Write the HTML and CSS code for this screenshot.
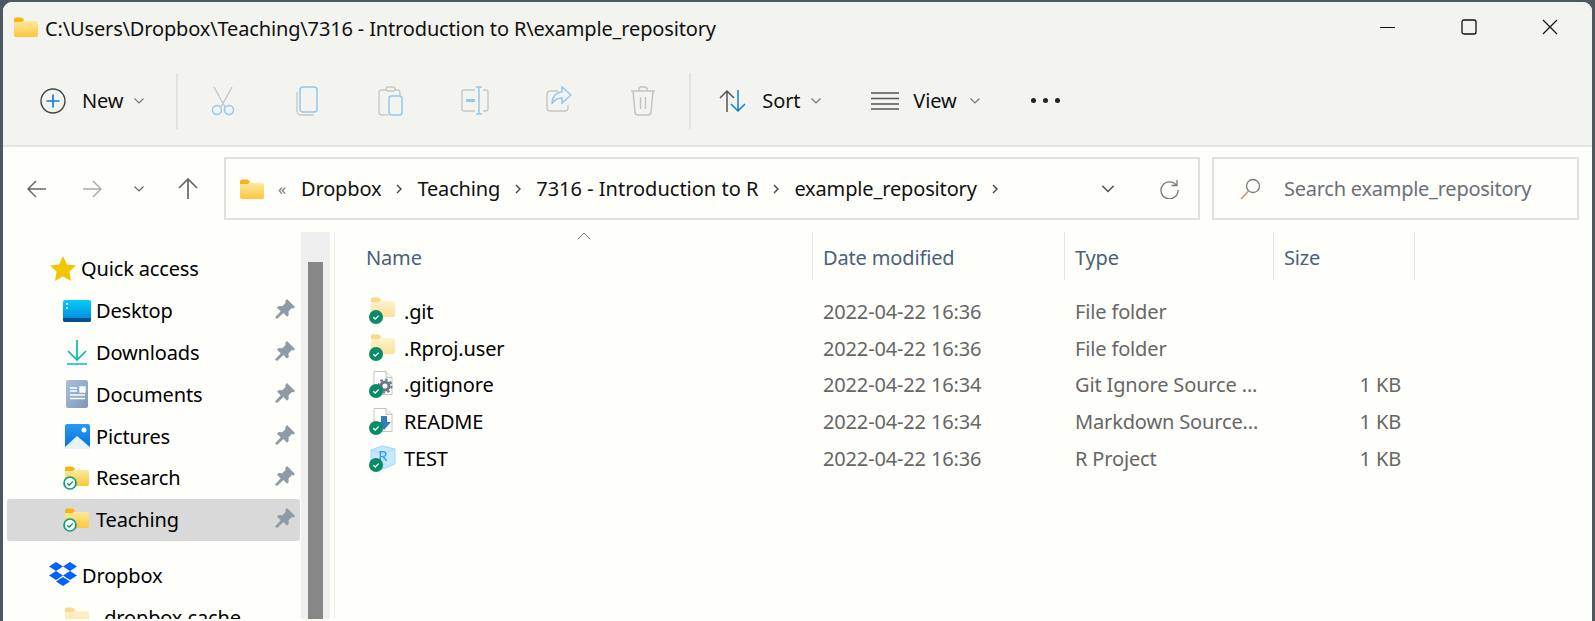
FILE: index.html
```html
<!DOCTYPE html>
<html>
<head>
  <title>example_repository</title>
  <link rel="stylesheet" href="styles.css">
</head>
<body>
  <svg class="defs" width="0" height="0">
    <defs>
      <linearGradient id="folderFill" x1="0" y1="0" x2="0" y2="1">
        <stop offset="0" stop-color="#fee9a0"/>
        <stop offset="1" stop-color="#fbc63a"/>
      </linearGradient>
      <linearGradient id="desktopFill" x1="0" y1="0" x2="0" y2="1">
        <stop offset="0" stop-color="#06cdf9"/>
        <stop offset="1" stop-color="#0382d8"/>
      </linearGradient>
      <linearGradient id="docFill" x1="0" y1="0" x2="1" y2="1">
        <stop offset="0" stop-color="#a9bfd8"/>
        <stop offset="1" stop-color="#7c9abb"/>
      </linearGradient>
      <linearGradient id="picFill" x1="0" y1="0" x2="0" y2="1">
        <stop offset="0" stop-color="#2b9cf2"/>
        <stop offset="1" stop-color="#0070d6"/>
      </linearGradient>
      <symbol id="folder" viewBox="0 0 24 20">
        <path d="M0 4h22a2 2 0 0 1 2 2v12a2 2 0 0 1-2 2H2a2 2 0 0 1-2-2z" fill="url(#folderFill)"/>
        <path d="M0 2.500a2 2 0 0 1 2-2h5.500l3 2.500-3 2H0z" fill="#f6b418"/>
      </symbol>
      <symbol id="pin" viewBox="0 0 20 20">
        <path d="M12 0l8 8-1.500 1.500-1.700-.4-3.300 3.300.2 3.600-1.700 1.700-3.500-3.700L2 20l-2-1.500 5.700-6.300-3.700-3.500L3.700 7l3.600.2 3.300-3.300-.4-1.700z" fill="#8f9ba4"/>
      </symbol>
      <symbol id="chev" viewBox="0 0 12 8">
        <path d="M1.500 1.500L6 6l4.500-4.500" fill="none" stroke="currentColor" stroke-width="1.200"/>
      </symbol>
      <symbol id="crumb" viewBox="0 0 8 12">
        <path d="M2 2l4 4-4 4" fill="none" stroke="#444" stroke-width="1.400"/>
      </symbol>
      <symbol id="syncSolid" viewBox="0 0 14 14">
        <circle cx="7" cy="7" r="7" fill="#0a8a66"/>
        <path d="M4.300 7.200l1.900 1.800 3.500-3.400" fill="none" stroke="#fff" stroke-width="1.300"/>
      </symbol>
      <symbol id="syncRing" viewBox="0 0 14 14">
        <circle cx="7" cy="7" r="6" fill="#fff" stroke="#0aa07a" stroke-width="1.700"/>
        <path d="M4.200 7.200l2 1.900 3.600-3.600" fill="none" stroke="#0a8a66" stroke-width="1.300"/>
      </symbol>
      <symbol id="page" viewBox="0 0 20 24">
        <path d="M1 .5h12l6 6v17H1z" fill="#fff" stroke="#c4c4c4"/>
        <path d="M13 .5v6h6" fill="#eee" stroke="#c4c4c4"/>
      </symbol>
    </defs>
  </svg>

  <div class="window">
    <div class="titlebar">
      <svg class="title-folder" width="24" height="20"><use href="#folder"/></svg>
      <span class="title-text">C:\Users\Dropbox\Teaching\7316 - Introduction to R\example_repository</span>
      <div class="win-buttons">
        <svg class="win-btn" width="16" height="16" viewBox="0 0 16 16"><path d="M0 8.500h15" stroke="#111" stroke-width="1.200"/></svg>
        <svg class="win-btn" width="16" height="16" viewBox="0 0 16 16"><rect x="1" y="1" width="14" height="14" rx="2" fill="none" stroke="#111" stroke-width="1.300"/></svg>
        <svg class="win-btn" width="16" height="16" viewBox="0 0 16 16"><path d="M1 1l14 14M15 1L1 15" stroke="#111" stroke-width="1.200"/></svg>
      </div>
    </div>

    <div class="toolbar">
      <div class="tool tool-new">
        <svg width="26" height="26" viewBox="0 0 26 26"><circle cx="13" cy="13" r="12" fill="none" stroke="#444" stroke-width="1.400"/><path d="M13 6.500v13M6.500 13h13" stroke="#0a7fe0" stroke-width="1.700"/></svg>
        <span>New</span>
        <svg class="tool-chev" width="12" height="8"><use href="#chev"/></svg>
      </div>
      <div class="tool-sep sep-first"></div>
      <div class="tool-icons">
        <div class="tool-icon">
          <svg width="26" height="30" viewBox="0 0 26 30"><path d="M4 1l11 20M22 1L11 21" fill="none" stroke="#c4c4c4" stroke-width="1.300"/><circle cx="7" cy="24" r="4.500" fill="none" stroke="#93c8f0" stroke-width="1.500"/><circle cx="19" cy="24" r="4.500" fill="none" stroke="#93c8f0" stroke-width="1.500"/></svg>
        </div>
        <div class="tool-icon">
          <svg width="24" height="30" viewBox="0 0 24 30"><path d="M2 6v19a4 4 0 0 0 4 4h13" fill="none" stroke="#c8c8c8" stroke-width="1.400"/><rect x="5" y="1" width="17" height="25" rx="3" fill="none" stroke="#93c8f0" stroke-width="1.500"/></svg>
        </div>
        <div class="tool-icon">
          <svg width="26" height="30" viewBox="0 0 26 30"><path d="M9 4H3.500A2.500 2.500 0 0 0 1 6.500v20A2.500 2.500 0 0 0 3.500 29H10M17 4h2.500A2.500 2.500 0 0 1 22 6.500V9" fill="none" stroke="#c8c8c8" stroke-width="1.400"/><rect x="8" y="1" width="9" height="4" rx="1.500" fill="none" stroke="#c8c8c8" stroke-width="1.400"/><rect x="11" y="10" width="13" height="19" rx="2.500" fill="none" stroke="#93c8f0" stroke-width="1.500"/></svg>
        </div>
        <div class="tool-icon">
          <svg width="28" height="30" viewBox="0 0 28 30"><path d="M14 4H3a2 2 0 0 0-2 2v17a2 2 0 0 0 2 2h11M22 4h3a2 2 0 0 1 2 2v17a2 2 0 0 1-2 2h-3" fill="none" stroke="#c8c8c8" stroke-width="1.400"/><path d="M15 1h6M18 1v27M15 28h6" fill="none" stroke="#93c8f0" stroke-width="1.500"/><path d="M5 14.500h9" stroke="#93c8f0" stroke-width="3"/></svg>
        </div>
        <div class="tool-icon">
          <svg width="26" height="26" viewBox="0 0 26 26"><path d="M12 5H4a3 3 0 0 0-3 3v14a3 3 0 0 0 3 3h15a3 3 0 0 0 3-3v-3" fill="none" stroke="#c8c8c8" stroke-width="1.500"/><path d="M16 1l9 8-9 8v-5c-5 0-8 2-10 6 0-7 4-12 10-12z" fill="none" stroke="#93c8f0" stroke-width="1.500"/></svg>
        </div>
        <div class="tool-icon">
          <svg width="26" height="30" viewBox="0 0 26 30"><path d="M1 5h24M9 5V3a2 2 0 0 1 2-2h4a2 2 0 0 1 2 2v2M3 5l2 21a3 3 0 0 0 3 3h10a3 3 0 0 0 3-3l2-21M10.500 11v12M15.500 11v12" fill="none" stroke="#c4c4c4" stroke-width="1.500"/></svg>
        </div>
      </div>
      <div class="tool-sep sep-second"></div>
      <div class="tool tool-sort">
        <svg width="27" height="24" viewBox="0 0 27 24"><path d="M8 23V2M1 9l7-7 7 7" fill="none" stroke="#555" stroke-width="1.500"/><path d="M19 1v21M12 15l7 7 7-7" fill="none" stroke="#0a7fe0" stroke-width="1.500"/></svg>
        <span>Sort</span>
        <svg class="tool-chev" width="12" height="8"><use href="#chev"/></svg>
      </div>
      <div class="tool tool-view">
        <svg width="28" height="20" viewBox="0 0 28 20"><path d="M0 2h28M0 7.500h28M0 13h28M0 18h28" stroke="#555" stroke-width="1.300"/></svg>
        <span>View</span>
        <svg class="tool-chev" width="12" height="8"><use href="#chev"/></svg>
      </div>
      <div class="tool-more"><i></i><i></i><i></i></div>
    </div>

    <div class="navbar">
      <div class="nav-btn"><svg width="20" height="18" viewBox="0 0 20 18"><path d="M19 9H1M9 1L1 9l8 8" fill="none" stroke="#666" stroke-width="1.500"/></svg></div>
      <div class="nav-btn nav-fwd"><svg width="20" height="18" viewBox="0 0 20 18"><path d="M1 9h18M11 1l8 8-8 8" fill="none" stroke="#aaa" stroke-width="1.500"/></svg></div>
      <div class="nav-btn nav-recent"><svg width="12" height="8"><use href="#chev"/></svg></div>
      <div class="nav-btn nav-up"><svg width="20" height="22" viewBox="0 0 20 22"><path d="M10 21V1M1 10l9-9 9 9" fill="none" stroke="#666" stroke-width="1.700"/></svg></div>
      <div class="address">
        <svg class="addr-folder" width="24" height="20"><use href="#folder"/></svg>
        <span class="addr-more">«</span>
        <span class="crumb">Dropbox</span>
        <svg class="crumb-sep" width="8" height="12"><use href="#crumb"/></svg>
        <span class="crumb">Teaching</span>
        <svg class="crumb-sep" width="8" height="12"><use href="#crumb"/></svg>
        <span class="crumb crumb-long">7316 - Introduction to R</span>
        <svg class="crumb-sep" width="8" height="12"><use href="#crumb"/></svg>
        <span class="crumb">example_repository</span>
        <svg class="crumb-sep" width="8" height="12"><use href="#crumb"/></svg>
        <svg class="addr-chev" width="16" height="10" viewBox="0 0 12 8"><use href="#chev"/></svg>
        <svg class="addr-refresh" width="20" height="20" viewBox="0 0 20 20"><path d="M17.500 6.500A8.500 8.500 0 1 0 19 11M18 1v5.500h-5.500" fill="none" stroke="#777" stroke-width="1.300"/></svg>
      </div>
      <div class="search">
        <svg width="21" height="22" viewBox="0 0 21 22"><circle cx="13" cy="8" r="6.500" fill="none" stroke="#777" stroke-width="1.300"/><path d="M8.500 13L1 21" stroke="#c98a50" stroke-width="1.300"/></svg>
        <span>Search example_repository</span>
      </div>
    </div>

    <div class="main">
      <div class="sidebar">
        <div class="side-row top-row">
          <svg class="side-icon" width="26" height="25" viewBox="0 0 26 25"><path d="M13 0l3.900 8.400 9.100 1.100-6.700 6.300 1.800 9.200L13 20.400 4.900 25l1.800-9.200L0 9.500l9.100-1.100z" fill="#f3c400"/></svg>
          <span>Quick access</span>
        </div>
        <div class="side-row">
          <svg class="side-icon" width="28" height="22" viewBox="0 0 28 22"><rect width="28" height="22" rx="2" fill="url(#desktopFill)"/><path d="M0 18h28v2a2 2 0 0 1-2 2H2a2 2 0 0 1-2-2z" fill="#04508f"/><rect x="3" y="3" width="2" height="2" fill="#fff"/><rect x="3" y="7" width="2" height="2" fill="#d9f4ff"/></svg>
          <span>Desktop</span>
          <svg class="pin" width="20" height="20"><use href="#pin"/></svg>
        </div>
        <div class="side-row">
          <svg class="side-icon" width="28" height="26" viewBox="0 0 28 26"><path d="M14 1v19M5 12l9 9 9-9M4 25h20" fill="none" stroke="#05bdb0" stroke-width="1.700"/></svg>
          <span>Downloads</span>
          <svg class="pin" width="20" height="20"><use href="#pin"/></svg>
        </div>
        <div class="side-row">
          <svg class="side-icon" width="28" height="28" viewBox="0 0 28 28"><rect x="3" y="0" width="22" height="28" rx="2" fill="url(#docFill)"/><path d="M7 8h7M7 11h7M17 7h5v5h-5zM7 15h15M7 18.500h15" stroke="#fff" stroke-width="1.300" fill="#fff"/></svg>
          <span>Documents</span>
          <svg class="pin" width="20" height="20"><use href="#pin"/></svg>
        </div>
        <div class="side-row">
          <svg class="side-icon" width="28" height="25" viewBox="0 0 28 25"><rect x="2" y="0" width="25" height="25" rx="2" fill="url(#picFill)"/><path d="M2 23l12-11 13 11v2H2z" fill="#e6f3fd"/><circle cx="21" cy="6" r="2.500" fill="#fff"/></svg>
          <span>Pictures</span>
          <svg class="pin" width="20" height="20"><use href="#pin"/></svg>
        </div>
        <div class="side-row">
          <span class="side-icon badge-box">
            <svg class="badge-folder" width="24" height="20"><use href="#folder"/></svg>
            <svg class="badge-sync" width="14" height="14"><use href="#syncRing"/></svg>
          </span>
          <span>Research</span>
          <svg class="pin" width="20" height="20"><use href="#pin"/></svg>
        </div>
        <div class="side-row selected">
          <span class="side-icon badge-box">
            <svg class="badge-folder" width="24" height="20"><use href="#folder"/></svg>
            <svg class="badge-sync" width="14" height="14"><use href="#syncRing"/></svg>
          </span>
          <span>Teaching</span>
          <svg class="pin" width="20" height="20"><use href="#pin"/></svg>
        </div>
        <div class="side-row top-row dropbox-row">
          <svg class="side-icon" width="28" height="26" viewBox="0 0 28 26"><path d="M7 0L0 4.500 7 9l7-4.500zM21 0l-7 4.500L21 9l7-4.500zM0 13.500L7 18l7-4.500L7 9zM21 9l-7 4.500 7 4.500 7-4.500zM7 19.500l7 4.500 7-4.500-7-4.500z" fill="#0061fe"/></svg>
          <span>Dropbox</span>
        </div>
        <div class="side-row">
          <svg class="side-icon faded" width="24" height="20"><use href="#folder"/></svg>
          <span>.dropbox.cache</span>
        </div>
      </div>
      <div class="scrollbar"><div class="scroll-thumb"></div></div>
      <div class="list-rule"></div>

      <div class="files">
        <div class="file-head">
          <div class="head-cell name-col">Name
            <svg class="sort-caret" width="14" height="8" viewBox="0 0 14 8"><path d="M1 7l6-6 6 6" fill="none" stroke="#777" stroke-width="1"/></svg>
          </div>
          <div class="head-cell">Date modified</div>
          <div class="head-cell">Type</div>
          <div class="head-cell">Size</div>
        </div>

        <div class="file-row">
          <div class="file-name">
            <span class="file-icon"><svg class="faded" width="24" height="20"><use href="#folder"/></svg><svg class="file-sync" width="14" height="14"><use href="#syncSolid"/></svg></span>
            .git
          </div>
          <div class="file-cell">2022-04-22 16:36</div>
          <div class="file-cell">File folder</div>
          <div class="file-cell file-size"></div>
        </div>
        <div class="file-row">
          <div class="file-name">
            <span class="file-icon"><svg class="faded" width="24" height="20"><use href="#folder"/></svg><svg class="file-sync" width="14" height="14"><use href="#syncSolid"/></svg></span>
            .Rproj.user
          </div>
          <div class="file-cell">2022-04-22 16:36</div>
          <div class="file-cell">File folder</div>
          <div class="file-cell file-size"></div>
        </div>
        <div class="file-row">
          <div class="file-name">
            <span class="file-icon">
              <svg class="file-page" width="20" height="24" viewBox="0 0 20 24"><use href="#page"/><circle cx="12" cy="15" r="4" fill="none" stroke="#6b7680" stroke-width="3"/><circle cx="12" cy="15" r="6.500" fill="none" stroke="#6b7680" stroke-width="2" stroke-dasharray="2.500 2.500"/></svg>
              <svg class="file-sync" width="14" height="14"><use href="#syncSolid"/></svg>
            </span>
            .gitignore
          </div>
          <div class="file-cell">2022-04-22 16:34</div>
          <div class="file-cell">Git Ignore Source ...</div>
          <div class="file-cell file-size">1 KB</div>
        </div>
        <div class="file-row">
          <div class="file-name">
            <span class="file-icon">
              <svg class="file-page" width="20" height="24" viewBox="0 0 20 24"><use href="#page"/><path d="M8 8h6v6h4l-7 8-7-8h4z" fill="#2f7fb8"/></svg>
              <svg class="file-sync" width="14" height="14"><use href="#syncSolid"/></svg>
            </span>
            README
          </div>
          <div class="file-cell">2022-04-22 16:34</div>
          <div class="file-cell">Markdown Source...</div>
          <div class="file-cell file-size">1 KB</div>
        </div>
        <div class="file-row">
          <div class="file-name">
            <span class="file-icon">
              <svg class="file-page cube" width="26" height="25" viewBox="0 0 26 25"><path d="M1 5l11-4 13 3v15l-12 5L1 20z" fill="#c5e8fa" stroke="#a6d8f4"/><path d="M1 5l12 3.500L25 4M13 8.500V24" fill="none" stroke="#a6d8f4"/><text class="r-mark" x="8" y="16">R</text></svg>
              <svg class="file-sync" width="14" height="14"><use href="#syncSolid"/></svg>
            </span>
            TEST
          </div>
          <div class="file-cell">2022-04-22 16:36</div>
          <div class="file-cell">R Project</div>
          <div class="file-cell file-size">1 KB</div>
        </div>
      </div>
    </div>
  </div>
</body>
</html>
```

FILE: styles.css
```css
body {
  margin: 0;
  height: 621px;
  overflow: hidden;
  background-color: #4d5862;
  font-family: "Noto Sans", "Liberation Sans", sans-serif;
  font-size: 20px;
  letter-spacing: -0.15px;
  color: #111;
  padding: 2px 3px 0 3px;
  box-sizing: border-box;
}

.defs {
  position: absolute;
}

.window {
  height: 619px;
  background-color: #fefefb;
  border-radius: 9px 9px 0 0;
  overflow: hidden;
}

svg {
  display: block;
  flex: none;
}

/* title bar */
.titlebar {
  height: 54px;
  background-color: #f3f3ef;
  display: flex;
  align-items: center;
  padding-left: 11px;
}

.title-folder {
  margin-top: -4px;
}

.title-text {
  margin-left: 7px;
  margin-top: -2px;
}

.win-buttons {
  margin-left: auto;
  display: flex;
  margin-top: -4px;
  margin-right: 34px;
  gap: 65px;
}

/* toolbar */
.toolbar {
  height: 89px;
  background-color: #f3f3ef;
  border-bottom: 2px solid #e3e3e1;
  display: flex;
  align-items: center;
  padding-left: 37px;
}

.tool {
  display: flex;
  align-items: center;
}

.tool-new span {
  margin-left: 16px;
}

.tool-chev {
  color: #777;
  margin-left: 10px;
}

.tool-sep {
  width: 2px;
  height: 56px;
  background-color: #e3e3e1;
}

.sep-first {
  margin-left: 31px;
}

.tool-icons {
  display: flex;
  margin-left: 3px;
}

.tool-icon {
  width: 84px;
  display: flex;
  justify-content: center;
}

.sep-second {
  margin-left: 4px;
}

.tool-sort {
  margin-left: 28px;
}

.tool-sort span {
  margin-left: 16px;
}

.tool-view {
  margin-left: 49px;
}

.tool-view span {
  margin-left: 14px;
}

.tool-view .tool-chev {
  margin-left: 12px;
}

.tool-more {
  margin-left: 50px;
  display: flex;
  gap: 7px;
}

.tool-more i {
  width: 5px;
  height: 5px;
  border-radius: 50%;
  background-color: #222;
}

/* address row */
.navbar {
  height: 85px;
  box-sizing: border-box;
  padding: 10px 0 0 7px;
  display: flex;
  align-items: flex-start;
}

.nav-btn {
  width: 54px;
  height: 63px;
  display: flex;
  align-items: center;
  justify-content: center;
  color: #666;
}

.nav-fwd {
  width: 56px;
}

.nav-recent {
  width: 38px;
}

.nav-up {
  width: 60px;
  margin-right: 6px;
}

.address,
.search {
  height: 63px;
  box-sizing: border-box;
  border: 2px solid #e0e0de;
  display: flex;
  align-items: center;
}

.address {
  width: 976px;
  padding: 0 19px 0 14px;
}

.addr-more {
  margin-left: 14px;
  color: #777;
  font-size: 16px;
}

.addr-more + .crumb {
  margin-left: 15px;
}

.crumb-long {
  letter-spacing: 0;
}

.crumb-sep {
  margin: 0 14px;
}

.addr-chev {
  color: #555;
  margin-left: auto;
}

.addr-refresh {
  margin-left: 43px;
}

.search {
  width: 367px;
  margin-left: 12px;
  padding-left: 26px;
  color: #6b7078;
}

.search span {
  margin-left: 23px;
  letter-spacing: -0.25px;
}

/* sidebar */
.main {
  display: flex;
  height: 387px;
  overflow: hidden;
}

.sidebar {
  width: 293px;
  margin: 0 1px 0 4px;
  padding-top: 16px;
  flex: none;
  color: #000;
}

.side-row {
  height: 41.800px;
  display: flex;
  align-items: center;
  padding: 0 5px 0 56px;
  border-radius: 3px;
  white-space: nowrap;
}

.top-row {
  padding-left: 43px;
}

.dropbox-row {
  margin-top: 14px;
  padding-left: 42px;
}

.selected {
  background-color: #d9d9d9;
}

.side-icon {
  margin-right: 5px;
}

.side-row .faded {
  margin-left: 2px;
  margin-right: 10px;
}

.faded {
  opacity: 0.5;
}

.pin {
  margin-left: auto;
  margin-top: -3px;
}

.badge-box {
  width: 28px;
  height: 28px;
  position: relative;
  flex: none;
}

.badge-folder {
  position: absolute;
  left: 2px;
  top: 2px;
}

.badge-sync {
  position: absolute;
  left: 0;
  top: 12px;
}

/* scrollbar */
.scrollbar {
  width: 29px;
  flex: none;
  background-color: #efefef;
  padding-left: 7px;
  box-sizing: border-box;
}

.scroll-thumb {
  width: 15px;
  height: 400px;
  margin-top: 30px;
  background-color: #878787;
}

.list-rule {
  width: 1px;
  margin-left: 4px;
  flex: none;
  background-color: #efefef;
}

/* file list */
.files {
  flex: none;
  width: 1080px;
}

.file-head,
.file-row {
  display: grid;
  grid-template-columns: 478px 252px 209px 141px;
}

.file-head {
  height: 48px;
  margin-bottom: 13px;
}

.head-cell {
  display: flex;
  align-items: center;
  border-right: 1px solid #e6e6e6;
  padding: 3px 0 0 10px;
  color: #4c6078;
  box-sizing: border-box;
  position: relative;
}

.name-col {
  padding-left: 31px;
}

.sort-caret {
  position: absolute;
  left: 242px;
  top: 0;
}

.file-row {
  height: 36.800px;
  align-items: center;
  color: #666;
}

.file-name {
  display: flex;
  align-items: center;
  padding-left: 35px;
  color: #000;
}

.file-icon {
  width: 27px;
  height: 28px;
  margin-right: 7px;
  position: relative;
  flex: none;
}

.file-icon .faded,
.file-page {
  position: absolute;
  left: 1px;
  top: 0;
}

.file-page {
  left: 3px;
}

.file-page.cube {
  left: 0;
}

.file-sync {
  position: absolute;
  left: -1px;
  top: 13px;
}

.file-cell {
  padding-left: 10px;
  white-space: nowrap;
}

.file-size {
  text-align: right;
  padding-right: 14px;
}

.r-mark {
  font-size: 15px;
  fill: #2a9df4;
}
```
